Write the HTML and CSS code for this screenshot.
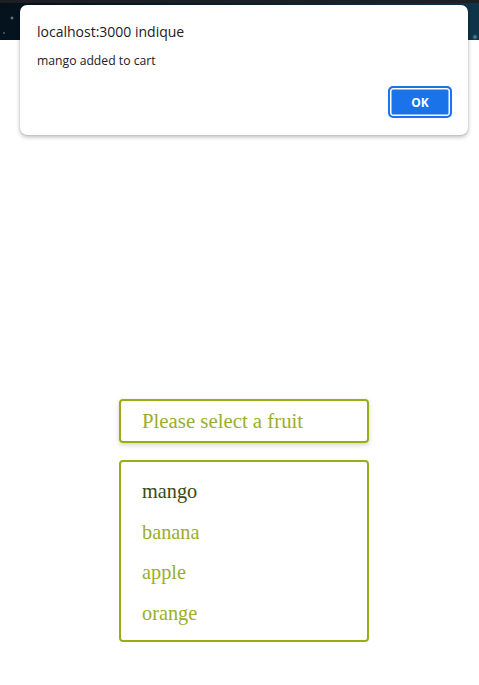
FILE: index.html
```html
<!DOCTYPE html>
<html lang="en">
<head>
<meta charset="utf-8">
<title>Fruits</title>
<link rel="stylesheet" href="styles.css">
</head>
<body>
<header class="banner"></header>
<main class="content">
  <div class="select">Please select a fruit</div>
  <ul class="options">
    <li class="option active">mango</li>
    <li class="option">banana</li>
    <li class="option">apple</li>
    <li class="option">orange</li>
  </ul>
</main>
<div class="dialog">
  <div class="dialog-title">localhost:3000 indique</div>
  <div class="dialog-msg">mango added to cart</div>
  <div class="dialog-actions">
    <button class="ok">OK</button>
  </div>
</div>
</body>
</html>
```
FILE: styles.css
```css
html, body {
  margin: 0;
  padding: 0;
  background: #ffffff;
}
body {
  width: 479px;
  height: 685px;
  overflow: hidden;
}
.banner {
  height: 40px;
  border-top: 3px solid #1e1f22;
  box-sizing: border-box;
  background:
    radial-gradient(circle at 12px 15px, rgba(200,220,255,0.7) 0, rgba(200,220,255,0) 2px),
    radial-gradient(circle at 4px 30px, rgba(200,220,255,0.5) 0, rgba(200,220,255,0) 1.5px),
    radial-gradient(circle at 475px 34px, rgba(150,200,240,0.6) 0, rgba(150,200,240,0) 3px),
    linear-gradient(90deg, #04121c 0%, #081a28 30%, #0b2436 60%, #0f3448 100%);
}
.content {
  padding-top: 359px;
  padding-left: 119px;
}
.select {
  box-sizing: border-box;
  width: 250px;
  height: 44px;
  border: 2px solid #9aad16;
  border-radius: 4px;
  box-shadow: 0 2px 5px rgba(0,0,0,0.18);
  padding-left: 21px;
  font-family: "Liberation Serif", "Times New Roman", serif;
  font-size: 20.8px;
  line-height: 40px;
  color: #9aae2c;
}
.options {
  list-style: none;
  margin: 17px 0 0 0;
  box-sizing: border-box;
  width: 250px;
  height: 182px;
  border: 2px solid #9aad16;
  border-radius: 4px;
  padding: 9px 0 0 21px;
}
.option {
  font-family: "Liberation Serif", "Times New Roman", serif;
  font-size: 20.3px;
  line-height: 40.5px;
  height: 40.5px;
  color: #9aae2c;
}
.option.active {
  color: #3a4a0e;
}
.dialog {
  position: absolute;
  left: 20px;
  top: 5px;
  width: 448px;
  height: 130px;
  box-sizing: border-box;
  background: #ffffff;
  border-radius: 7px;
  box-shadow: 0 2px 4px rgba(0,0,0,0.28), 0 0 1px rgba(0,0,0,0.3);
  padding: 17px 16px 0 17px;
  font-family: "Open Sans", "Noto Sans", sans-serif;
  color: #202124;
}
.dialog-title {
  font-size: 14px;
  line-height: 20px;
}
.dialog-msg {
  font-size: 12.2px;
  line-height: 16px;
  margin-top: 11px;
}
.dialog-actions {
  display: flex;
  justify-content: flex-end;
  margin-top: 17px;
}
.ok {
  width: 64px;
  height: 32px;
  box-sizing: border-box;
  border: 2px solid #1a73e8;
  box-shadow: inset 0 0 0 1.5px #ffffff;
  border-radius: 5px;
  background: #1a73e8;
  color: #ffffff;
  font-family: "Open Sans", "Noto Sans", sans-serif;
  font-weight: 700;
  font-size: 12px;
  padding: 0;
  margin: 0;
}
```
